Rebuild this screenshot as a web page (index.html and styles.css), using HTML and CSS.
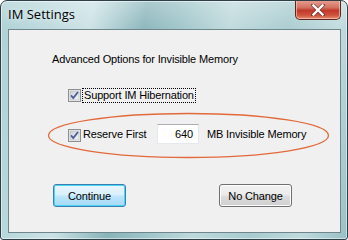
FILE: index.html
```html
<!DOCTYPE html>
<html>
<head>
<meta charset="utf-8">
<link rel="stylesheet" href="styles.css">
</head>
<body>
<div class="window">
  <div class="titlebar">
    <span class="title">IM Settings</span>
    <div class="close">
      <svg width="14" height="12" viewBox="0 0 14 12">
        <path d="M2 1 L12 11 M12 1 L2 11" stroke="#4a1a18" stroke-width="3.8" stroke-linecap="square" opacity="0.55"/>
        <path d="M2.5 1.5 L11.5 10.5 M11.5 1.5 L2.5 10.5" stroke="#ffffff" stroke-width="2.4" stroke-linecap="square"/>
      </svg>
    </div>
  </div>
  <div class="client">
    <div class="heading">Advanced Options for Invisible Memory</div>
    <div class="row row1">
      <span class="check">
        <svg width="13" height="13" viewBox="0 0 13 13">
          <defs>
            <linearGradient id="cb" x1="0" y1="0" x2="1" y2="1">
              <stop offset="0" stop-color="#cbcfd5"/>
              <stop offset="1" stop-color="#f6f6f6"/>
            </linearGradient>
          </defs>
          <rect x="0.5" y="0.5" width="12" height="12" fill="#f4f4f4" stroke="#8e8f8f"/>
          <rect x="2" y="2" width="9" height="9" fill="url(#cb)" stroke="#aeb3b9" stroke-width="0.6"/>
          <path d="M3 6.3 L5.3 9 L10 3" fill="none" stroke="#4a5f97" stroke-width="1.8"/>
        </svg>
      </span>
      <span class="label focus">Support IM Hibernation</span>
    </div>
    <div class="row row2">
      <span class="check check2">
        <svg width="13" height="13" viewBox="0 0 13 13">
          <defs>
            <linearGradient id="cb2" x1="0" y1="0" x2="1" y2="1">
              <stop offset="0" stop-color="#cbcfd5"/>
              <stop offset="1" stop-color="#f6f6f6"/>
            </linearGradient>
          </defs>
          <rect x="0.5" y="0.5" width="12" height="12" fill="#f4f4f4" stroke="#8e8f8f"/>
          <rect x="2" y="2" width="9" height="9" fill="url(#cb2)" stroke="#aeb3b9" stroke-width="0.6"/>
          <path d="M3 6.3 L5.3 9 L10 3" fill="none" stroke="#4a5f97" stroke-width="1.8"/>
        </svg>
      </span>
      <span class="label reserve">Reserve First</span>
      <span class="input">640</span>
      <span class="label mb">MB Invisible Memory</span>
    </div>
    <div class="buttons">
      <button class="btn default">Continue</button>
      <button class="btn">No Change</button>
    </div>
    <svg class="ellipse" width="283" height="47" viewBox="0 0 283 47">
      <ellipse cx="141.5" cy="23.5" rx="140" ry="22" fill="none" stroke="#e2693a" stroke-width="1.3"/>
    </svg>
  </div>
</div>
</body>
</html>
```

FILE: styles.css
```css
html, body {
  margin: 0;
  padding: 0;
  background: #ffffff;
}

.window {
  width: 348px;
  height: 240px;
  box-sizing: border-box;
  border: 1px solid #2e3f47;
  border-radius: 7px 7px 3px 3px;
  background:
    linear-gradient(180deg, rgba(255,255,255,0.3) 0px, rgba(255,255,255,0.05) 28px, rgba(255,255,255,0) 100%),
    linear-gradient(100deg, #a9cfd2 0%, #b9d8dc 12%, #cbe2e5 24%, #88b4ba 38%, #9ec5c9 48%, #bed9dc 60%, #a7cbcf 75%, #bfdadd 88%, #98c0c5 100%);
  display: flex;
  flex-direction: column;
  padding: 0 6px 6px 7px;
  overflow: hidden;
  box-shadow: inset 0 0 0 1px rgba(255,255,255,0.5);
}

.titlebar {
  height: 28px;
  display: flex;
  align-items: flex-start;
  justify-content: space-between;
  flex-shrink: 0;
}

.title {
  font-family: "Open Sans", "Noto Sans", sans-serif;
  font-size: 13px;
  color: #000000;
  padding-top: 4px;
  padding-left: 0px;
  text-shadow: 0 0 6px rgba(255,255,255,0.9);
}

.close {
  width: 46px;
  height: 20px;
  margin-top: -1px;
  margin-right: 0px;
  box-sizing: border-box;
  border: 1px solid #5e2520;
  border-top: none;
  border-radius: 0 0 5px 5px;
  background: linear-gradient(180deg, #e8a293 0%, #d2715f 40%, #c0392b 55%, #d0523c 80%, #e48f74 100%);
  box-shadow: inset 0 0 0 1px rgba(255,210,200,0.6);
  display: flex;
  align-items: center;
  justify-content: center;
}

.client {
  position: relative;
  flex: 1;
  background: #f0f0f0;
  border: 1px solid #6f868c;
  display: flex;
  flex-direction: column;
  padding: 22px 0 0 43px;
  font-family: "Liberation Sans", Arial, sans-serif;
  font-size: 11px;
  letter-spacing: -0.15px;
  color: #000000;
}

.heading {
  height: 14px;
  line-height: 14px;
}

.row {
  display: flex;
  align-items: center;
  margin-left: 16px;
}

.row1 {
  margin-top: 22px;
  height: 15px;
}

.row2 {
  margin-top: 21px;
  height: 20px;
}

.check {
  width: 13px;
  height: 13px;
  display: block;
  flex-shrink: 0;
}

.check svg {
  display: block;
}

.check2 {
  margin-top: 3px;
}

.label {
  line-height: 13px;
}

.focus {
  margin-left: 1px;
  padding: 0 1px;
  border: 1px dotted #000000;
}

.reserve {
  margin-left: 2px;
  width: 74px;
  flex-shrink: 0;
}

.input {
  width: 42px;
  height: 20px;
  box-sizing: border-box;
  background: #ffffff;
  border: 1px solid #e3e9ef;
  border-top-color: #abadb3;
  text-align: right;
  padding-right: 5px;
  line-height: 18px;
  flex-shrink: 0;
}

.mb {
  margin-left: 8px;
}

.buttons {
  display: flex;
  gap: 93px;
  margin-top: 40px;
  margin-left: 1px;
}

.btn {
  width: 73px;
  height: 23px;
  box-sizing: border-box;
  font-family: "Liberation Sans", Arial, sans-serif;
  font-size: 11px;
  letter-spacing: -0.15px;
  color: #000000;
  border: 1px solid #707070;
  border-radius: 3px;
  background: linear-gradient(180deg, #f2f2f2 0%, #ebebeb 48%, #dddddd 52%, #cfcfcf 100%);
  box-shadow: inset 0 0 0 1px #fcfcfc;
  padding: 0;
}

.btn.default {
  border-color: #3c7fb1;
  background: linear-gradient(180deg, #eaf6fd 0%, #d9f0fc 48%, #bee6fd 52%, #a7d9f5 100%);
  box-shadow: inset 0 0 0 1px #48d6f3;
}

.ellipse {
  position: absolute;
  left: 38px;
  top: 82px;
}
```
